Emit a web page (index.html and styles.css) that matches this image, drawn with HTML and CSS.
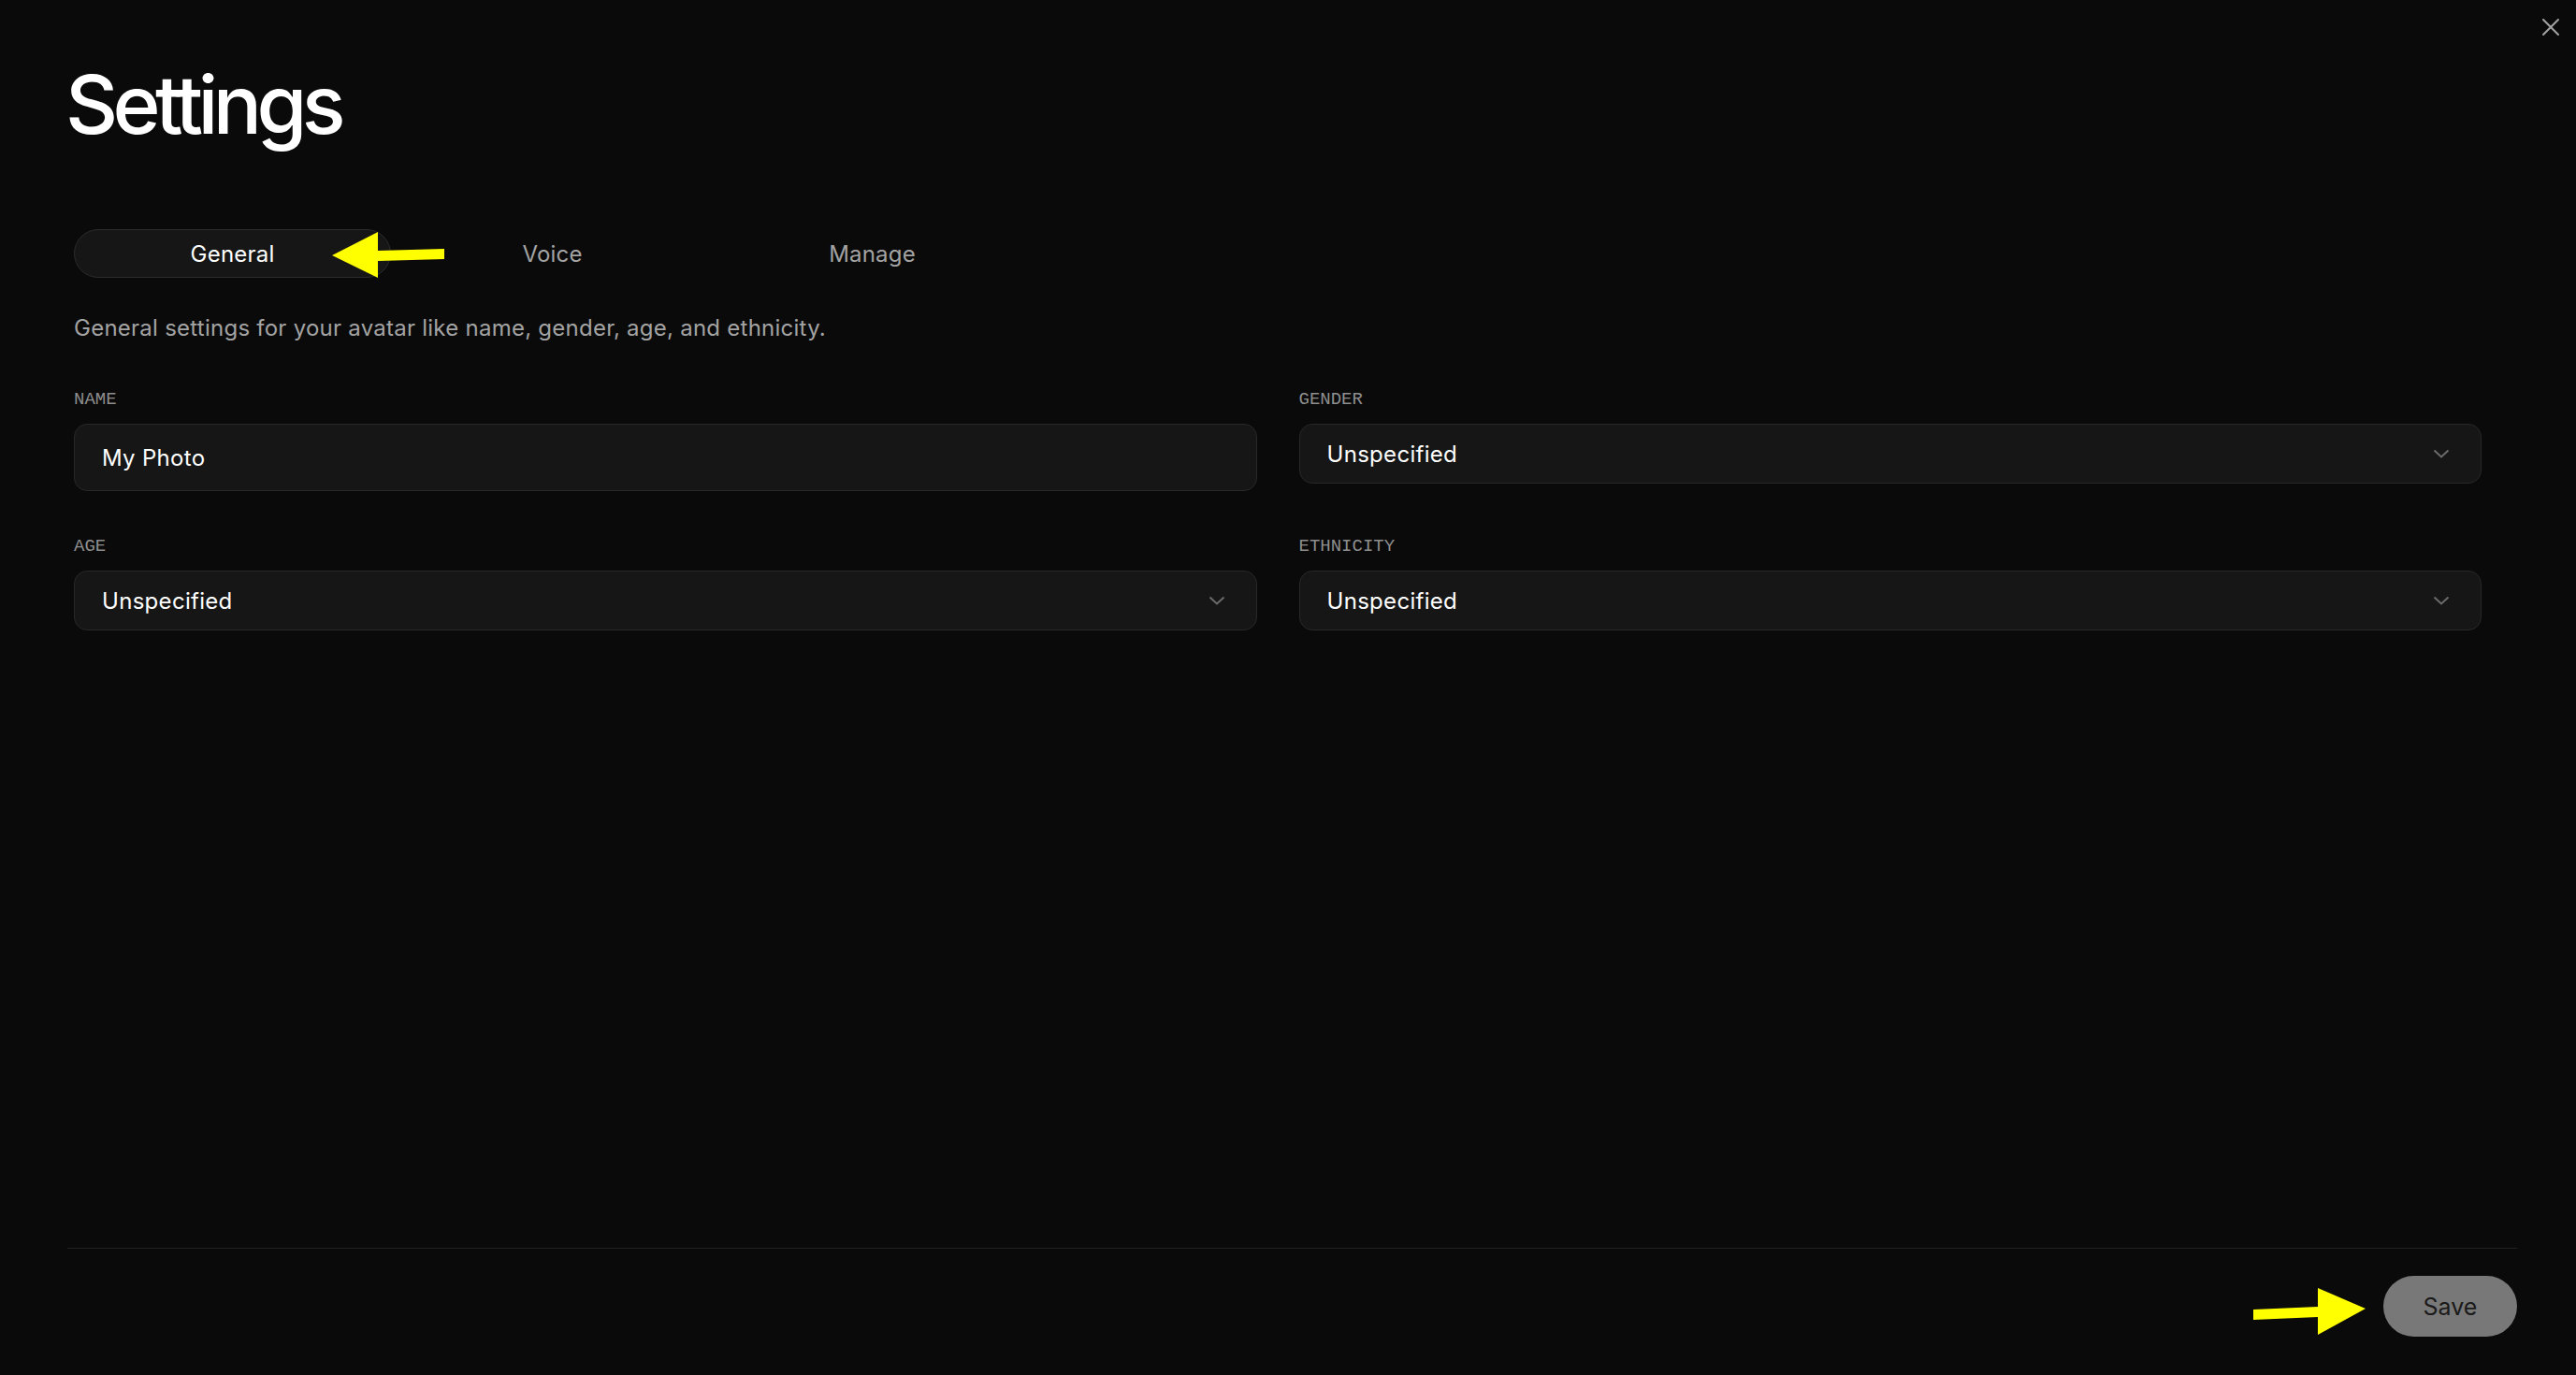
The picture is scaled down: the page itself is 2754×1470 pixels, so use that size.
FILE: index.html
```html
<!DOCTYPE html>
<html lang="en">
<head>
  <meta charset="UTF-8">
  <title>Settings</title>
  <link rel="stylesheet" href="styles.css">
</head>
<body>
  <div class="dialog">
    <button class="close" aria-label="Close">
      <svg width="20" height="20" viewBox="0 0 20 20"><path d="M2 2L18 18M18 2L2 18" stroke="#a3a3a3" stroke-width="2" stroke-linecap="round"/></svg>
    </button>

    <div class="header">
      <h1>Settings</h1>
    </div>

    <div class="body">
      <div class="tabs">
        <div class="tab active">General</div>
        <div class="tab">Voice</div>
        <div class="tab">Manage</div>
      </div>

      <p class="desc">General settings for your avatar like name, gender, age, and ethnicity.</p>

      <div class="fields">
        <div class="field">
          <label>NAME</label>
          <div class="control input">My Photo</div>
        </div>
        <div class="field">
          <label>GENDER</label>
          <div class="control select">
            <span>Unspecified</span>
            <svg width="18" height="10" viewBox="0 0 18 10"><path d="M1.5 1.5L9 8.5L16.5 1.5" fill="none" stroke="#6b6b6b" stroke-width="2"/></svg>
          </div>
        </div>
        <div class="field">
          <label>AGE</label>
          <div class="control select">
            <span>Unspecified</span>
            <svg width="18" height="10" viewBox="0 0 18 10"><path d="M1.5 1.5L9 8.5L16.5 1.5" fill="none" stroke="#6b6b6b" stroke-width="2"/></svg>
          </div>
        </div>
        <div class="field">
          <label>ETHNICITY</label>
          <div class="control select">
            <span>Unspecified</span>
            <svg width="18" height="10" viewBox="0 0 18 10"><path d="M1.5 1.5L9 8.5L16.5 1.5" fill="none" stroke="#6b6b6b" stroke-width="2"/></svg>
          </div>
        </div>
      </div>
    </div>

    <div class="footer">
      <button class="save">Save</button>
    </div>

    <!-- annotation arrows -->
    <svg class="marks" width="2754" height="1470" viewBox="0 0 2754 1470">
      <polygon points="355,273 404,248 404,268 475,266 475,277 404,279 404,297" fill="#ffff00"/>
      <polygon points="2409,1400 2478,1397 2478,1377 2529,1399 2478,1427 2478,1408 2409,1411" fill="#ffff00"/>
    </svg>
  </div>
</body>
</html>
```

FILE: styles.css
```css
* {
  box-sizing: border-box;
}

body {
  margin: 0;
  background: #0a0a0a;
  color: #fff;
  font-family: Inter, 'Noto Sans', sans-serif;
}

.dialog {
  position: relative;
  height: 100vh;
  display: flex;
  flex-direction: column;
}

.close {
  position: absolute;
  top: 19px;
  right: 17px;
  padding: 0;
  border: none;
  background: none;
  width: 20px;
  height: 20px;
  cursor: pointer;
}

.close svg {
  display: block;
}

.header {
  padding: 68px 70px 0;
}

h1 {
  margin: 0;
  font-size: 87px;
  line-height: 88px;
  font-weight: 500;
  letter-spacing: -0.065em;
}

.body {
  padding: 0 101px 0 79px;
}

.tabs {
  margin-top: 89px;
  width: 1023px;
  display: grid;
  grid-template-columns: repeat(3, 1fr);
  gap: 3px;
}

.tab {
  height: 52px;
  display: flex;
  align-items: center;
  justify-content: center;
  border-radius: 26px;
  border: 1px solid transparent;
  font-size: 24px;
  letter-spacing: 0.2px;
  color: #a3a3a3;
  cursor: pointer;
}

.tab.active {
  background: #161616;
  border-color: #2c2c2c;
  color: #fff;
}

.desc {
  margin: 36px 0 0;
  font-size: 24px;
  line-height: 36px;
  letter-spacing: 0.25px;
  color: #a3a3a3;
}

.fields {
  margin-top: 46px;
  display: grid;
  grid-template-columns: 1fr 1fr;
  column-gap: 45px;
  row-gap: 47px;
  align-items: start;
}

label {
  display: block;
  font-family: 'Liberation Mono', monospace;
  font-size: 19px;
  line-height: 24px;
  color: #8e8e8e;
  margin-bottom: 14px;
}

.control {
  display: flex;
  align-items: center;
  justify-content: space-between;
  background: #161616;
  border: 1px solid #282828;
  border-radius: 14px;
  padding: 0 33px 0 29px;
  font-size: 24px;
  letter-spacing: 0.3px;
  color: #fff;
}

.input {
  height: 72px;
}

.select {
  height: 64px;
}

.select svg {
  display: block;
}

.footer {
  margin: auto 63px 41px 72px;
  border-top: 1px solid #232323;
  padding-top: 29px;
  display: flex;
  justify-content: flex-end;
}

.save {
  width: 143px;
  height: 65px;
  border: none;
  border-radius: 33px;
  background: #787878;
  color: #1a1a1a;
  font-family: Inter, sans-serif;
  font-size: 25px;
  cursor: pointer;
}

.marks {
  position: absolute;
  top: 0;
  left: 0;
  pointer-events: none;
}
```
